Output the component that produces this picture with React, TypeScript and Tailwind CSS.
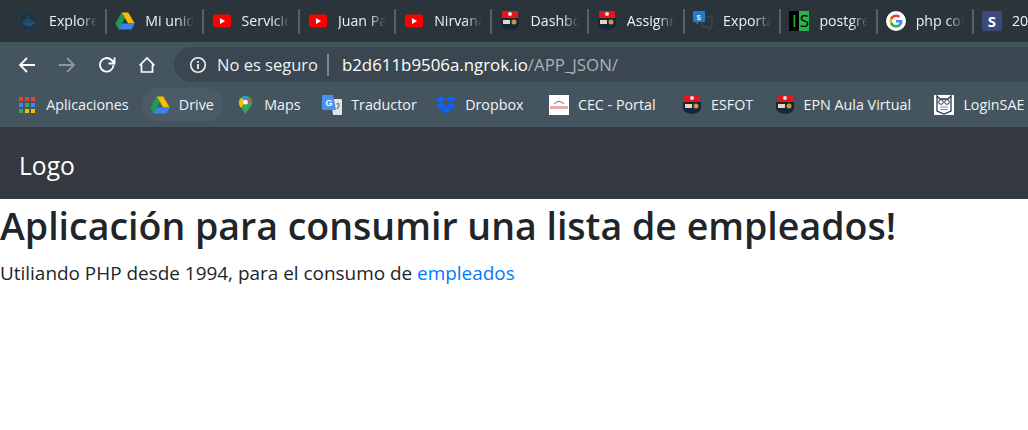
import React from "react";

const F = "font-['Open_Sans','Noto_Sans',sans-serif]";

function Drive({ s = 20 }: { s?: number }) {
  return (
    <svg width={s} height={s} viewBox="0 0 20 20" className="shrink-0">
      <path d="M6.700 1.500h6.600l6.400 11h-6.500z" fill="#fbbc04" />
      <path d="M6.700 1.500l3.300 5.700-6.400 11.300-3.300-6z" fill="#1a9c55" />
      <path d="M6.700 12.500h13l-3.300 6H3.600z" fill="#3f80f0" />
    </svg>
  );
}
function Yt() {
  return (
    <svg width="18" height="14" viewBox="0 0 18 14" className="shrink-0">
      <rect width="18" height="13" y=".5" rx="3.2" fill="#f00" />
      <path d="M7 4l5 3-5 3z" fill="#fff" />
    </svg>
  );
}
function Epn() {
  return (
    <svg width="18" height="20" viewBox="0 0 18 20" className="shrink-0">
      <path d="M1 0h16v7H1z" fill="#e8141c" />
      <circle cx="9" cy="3" r="2" fill="#d8dde0" />
      <path d="M0 7h18v6q0 5-9 6-9-1-9-6z" fill="#16263f" />
      <rect x="2" y="9" width="7" height="4" fill="#e7d9a8" />
      <circle cx="13" cy="11" r="2.500" fill="#c89a35" />
    </svg>
  );
}
function Docker() {
  return (
    <svg width="20" height="20" viewBox="0 0 20 20" className="shrink-0">
      <circle cx="10" cy="10" r="9.500" fill="#1d3443" stroke="#1f3f55" />
      <path d="M3.500 10.500h11c1 0 1.500-.8 2-1.300-.4 4-3.500 6-7 6-3.500 0-5.500-2-6-4.700z" fill="#24506e" />
      <path d="M5.500 8h2v2h-2zM8 8h2v2H8zM10.500 8h2v2h-2zM8 5.500h2v2H8z" fill="#24506e" />
    </svg>
  );
}
function Chat() {
  return (
    <svg width="20" height="20" viewBox="0 0 20 20" className="shrink-0">
      <path d="M10 6h8a1 1 0 0 1 1 1v8a1 1 0 0 1-1 1h-1v3l-3-3h-4a1 1 0 0 1-1-1V7a1 1 0 0 1 1-1z" fill="none" stroke="#45525b" />
      <path d="M1 0h10a1 1 0 0 1 1 1v9a1 1 0 0 1-1 1H6l-2.500 3v-3H1a1 1 0 0 1-1-1V1a1 1 0 0 1 1-1z" fill="#2b78c5" />
      <text x="3.500" y="8.500" fontSize="8" fontWeight="700" fill="#dce9f5" fontFamily="Liberation Sans">$</text>
    </svg>
  );
}
function Is() {
  return (
    <div className={`flex w-5 h-5 shrink-0 text-[17px] leading-5 text-center ${F}`}>
      <span className="w-[10px] bg-black text-[#2bb24c]">I</span>
      <span className="w-[10px] bg-[#2bb24c] text-black">S</span>
    </div>
  );
}
function Google() {
  return (
    <svg width="20" height="20" viewBox="0 0 20 20" className="shrink-0">
      <circle cx="10" cy="10" r="10" fill="#fff" />
      <path d="M16.400 10.200c0-.5 0-.9-.1-1.300H10v2.500h3.600c-.2.8-.6 1.500-1.300 2l2.100 1.600c1.300-1.200 2-2.900 2-4.800z" fill="#4285f4" />
      <path d="M10 16.500c1.800 0 3.300-.6 4.400-1.600l-2.100-1.600c-.6.400-1.400.7-2.300.7-1.700 0-3.200-1.200-3.700-2.800H4.100v1.700c1.100 2.200 3.300 3.600 5.900 3.600z" fill="#34a853" />
      <path d="M6.300 11.200c-.3-.8-.3-1.600 0-2.400V7.100H4.100c-.8 1.500-.8 4.300 0 5.800z" fill="#fbbc05" />
      <path d="M10 6c1 0 1.800.3 2.500 1l1.900-1.900C13.300 4.100 11.800 3.500 10 3.500c-2.600 0-4.800 1.400-5.900 3.600l2.200 1.700C6.800 7.200 8.300 6 10 6z" fill="#ea4335" />
    </svg>
  );
}
function SIcon() {
  return (
    <div className={`w-5 h-5 shrink-0 bg-[#3b4a78] text-white text-[15px] font-bold leading-5 text-center ${F}`}>S</div>
  );
}
function Apps() {
  const c = ["#e94235", "#e94235", "#e94235", "#4285f4", "#34a853", "#4285f4", "#34a853", "#fbbc04", "#fbbc04"];
  return (
    <div className="grid grid-cols-3 gap-[2px] w-4 h-4 shrink-0">
      {c.map((x, i) => (
        <span key={i} style={{ background: x }} />
      ))}
    </div>
  );
}
function Maps() {
  return (
    <svg width="15" height="20" viewBox="0 0 16 20" className="shrink-0">
      <path d="M8 20C6 15 1 12 1 7a7 7 0 0 1 7-7 7 7 0 0 1 7 7c0 5-5 8-7 13z" fill="#34a853" />
      <path d="M1.500 4.500 4 2l4 5-5 6C1.500 11 1 9 1 7z" fill="#fbbc04" />
      <path d="M4 2a7 7 0 0 1 4-2l3 3-3 4z" fill="#4285f4" />
      <path d="M8 7l3-4a7 7 0 0 1 4 4z" fill="#ea4335" />
      <circle cx="8" cy="7" r="2.500" fill="#fff" />
    </svg>
  );
}
function Translate() {
  return (
    <svg width="20" height="20" viewBox="0 0 20 20" className="shrink-0">
      <path d="M9 4h10a1 1 0 0 1 1 1v14a1 1 0 0 1-1 1H11z" fill="#e4e4e4" />
      <path d="M1 0h10l3 15H1a1 1 0 0 1-1-1V1a1 1 0 0 1 1-1z" fill="#4a90f0" />
      <path d="M14.500 9h3M16 8v1M15 14l2.500-4" stroke="#555" fill="none" />
      <text x="3.500" y="10.500" fontSize="9" fontWeight="700" fill="#fff" fontFamily="Liberation Sans">G</text>
    </svg>
  );
}
function Dropbox() {
  return (
    <svg width="20" height="18" viewBox="0 0 20 18" className="shrink-0">
      <path d="M5 0l5 3.300-5 3.300L0 3.300zM15 0l5 3.300-5 3.300-5-3.300zM0 9.900l5-3.300 5 3.300-5 3.300zM20 9.900l-5-3.300-5 3.300 5 3.300zM5 14.300l5-3.300 5 3.300-5 3.300z" fill="#0f62fe" />
    </svg>
  );
}
function Cec() {
  return (
    <svg width="20" height="20" viewBox="0 0 20 20" className="shrink-0">
      <rect width="20" height="20" fill="#fff" />
      <path d="M5 9q5-5 10 0" fill="none" stroke="#4a6a90" />
      <rect x="1" y="11" width="18" height="3" fill="#e8a9a9" />
    </svg>
  );
}
function Owl() {
  return (
    <svg width="20" height="20" viewBox="0 0 20 20" className="shrink-0">
      <rect width="20" height="20" fill="#fff" />
      <path d="M3 1l3 3h8l3-3v15l-7 3-7-3z" fill="none" stroke="#26384f" strokeWidth="1.300" />
      <circle cx="7" cy="7" r="2.300" fill="none" stroke="#26384f" />
      <circle cx="13" cy="7" r="2.300" fill="none" stroke="#26384f" />
      <path d="M6 12h8M6 14.500h8" stroke="#7c8fa3" />
    </svg>
  );
}

function Slot({ children }: { children: React.ReactNode }) {
  return <div className="w-5 h-5 shrink-0 flex items-center justify-center">{children}</div>;
}

function Tab({ icon, label }: { icon: React.ReactNode; label: string }) {
  return (
    <div className="flex items-center h-5 w-[78.3px] shrink-0 gap-[10px] overflow-hidden">
      <Slot>{icon}</Slot>
      <span
        className={`text-[14.2px] leading-5 whitespace-nowrap text-[#eef1f3] overflow-hidden flex-1 ${F}`}
        style={{ maskImage: "linear-gradient(to right,#000 65%,transparent 100%)" }}
      >
        {label}
      </span>
    </div>
  );
}
const Sep = () => <div className="w-[2px] h-[25px] mx-[8px] bg-[#566067] shrink-0" />;

function Mark({ icon, label, active, ml }: { icon: React.ReactNode; label: string; active?: boolean; ml: string }) {
  return (
    <div className={`flex items-center h-[33px] shrink-0 gap-[9px] pl-[8px] pr-[9px] mr-[2.2px] rounded-full ${ml} ${active ? "bg-[#4a5b65]" : ""}`}>
      <Slot>{icon}</Slot>
      <span className={`text-[14.3px] leading-5 whitespace-nowrap text-[#f1f3f4] ${F}`}>{label}</span>
    </div>
  );
}

export default function App() {
  return (
    <div className="w-[1028px] h-[430px] overflow-hidden bg-white">
      <div className="h-[42px] bg-[#2b343a] flex items-center pl-[19px] overflow-hidden">
        <Tab icon={<Docker />} label="Explorer" />
        <Sep />
        <Tab icon={<Drive />} label="Mi unidad" />
        <Sep />
        <Tab icon={<Yt />} label="Servicios" />
        <Sep />
        <Tab icon={<Yt />} label="Juan Pablo" />
        <Sep />
        <Tab icon={<Yt />} label="Nirvana" />
        <Sep />
        <Tab icon={<Epn />} label="Dashboard" />
        <Sep />
        <Tab icon={<Epn />} label="Assignment" />
        <Sep />
        <Tab icon={<Chat />} label="Exportar" />
        <Sep />
        <Tab icon={<Is />} label="postgres" />
        <Sep />
        <Tab icon={<Google />} label="php con" />
        <Sep />
        <Tab icon={<SIcon />} label="20 cosas" />
      </div>
      <div className="h-[40px] bg-[#44555f] flex items-end">
        <div className="flex items-center h-[35px] pl-[18px] gap-[22px] w-[174px] shrink-0">
          <svg width="18" height="18" viewBox="0 0 18 18" fill="none" stroke="#fff" strokeWidth="1.800" className="shrink-0">
            <path d="M17 9H2M9 2 2 9l7 7" />
          </svg>
          <svg width="18" height="18" viewBox="0 0 18 18" fill="none" stroke="#8b979e" strokeWidth="1.800" className="shrink-0">
            <path d="M1 9h15M9 2l7 7-7 7" />
          </svg>
          <svg width="18" height="18" viewBox="0 0 18 18" fill="none" stroke="#fff" strokeWidth="1.800" className="shrink-0">
            <path d="M15.500 9a6.800 6.800 0 1 1-2-5L16 6.500M16.500 1.500v6h-6" />
          </svg>
          <svg width="18" height="18" viewBox="0 0 18 18" fill="none" stroke="#fff" strokeWidth="1.700" className="shrink-0">
            <path d="M1.500 9.500 9 2l7.500 7.500M3.500 8.500V16h11V8.500" />
          </svg>
        </div>
        <div className="flex items-center flex-1 h-[35px] bg-[#3a4750] rounded-l-[18px] pl-[15px]">
          <svg width="18" height="18" viewBox="0 0 18 18" fill="none" className="shrink-0">
            <circle cx="9" cy="9" r="7.300" stroke="#eef1f3" strokeWidth="1.600" />
            <path d="M9 8v5M9 5v1.800" stroke="#eef1f3" strokeWidth="1.800" />
          </svg>
          <span className={`ml-[10px] text-[16.5px] leading-6 text-[#eef1f3] whitespace-nowrap ${F}`}>No es seguro</span>
          <div className="w-[2px] h-[22px] bg-[#7b868d] ml-[9px] mr-[13px] shrink-0" />
          <span className={`text-[16.85px] leading-6 text-white whitespace-nowrap ${F}`}>
            b2d611b9506a.ngrok.io<span className="text-[#a9b2b8]">/APP_JSON/</span>
          </span>
        </div>
      </div>
      <div className="h-[45px] bg-[#44555f] flex items-center pl-[7px] overflow-hidden">
        <Mark icon={<Apps />} label="Aplicaciones" ml="ml-[2.2px]" />
        <Mark icon={<Drive />} label="Drive" active ml="ml-[2px]" />
        <Mark icon={<Maps />} label="Maps" ml="ml-[2.2px]" />
        <Mark icon={<Translate />} label="Traductor" ml="ml-[2.4px]" />
        <Mark icon={<Dropbox />} label="Dropbox" ml="ml-[0.2px]" />
        <Mark icon={<Cec />} label="CEC - Portal" ml="ml-[6.2px]" />
        <Mark icon={<Epn />} label="ESFOT" ml="ml-[7.2px]" />
        <Mark icon={<Epn />} label="EPN Aula Virtual" ml="ml-[2.2px]" />
        <Mark icon={<Owl />} label="LoginSAE" ml="ml-[4.2px]" />
      </div>
      <div className="h-[72px] bg-[#343a40] flex items-center pl-[19px] pt-[6px]">
        <span className={`text-[24.6px] leading-8 text-white ${F}`}>Logo</span>
      </div>
      <h1 className={`text-[37.5px] leading-[48px] mt-[3px] font-semibold text-[#212529] whitespace-nowrap ${F}`}>
        Aplicación para consumir una lista de empleados!
      </h1>
      <p className={`text-[18.93px] leading-7 mt-[9px] text-[#212529] whitespace-nowrap ${F}`}>
        Utiliando PHP desde 1994, para el consumo de <span className="text-[#007bff]">empleados</span>
      </p>
    </div>
  );
}
